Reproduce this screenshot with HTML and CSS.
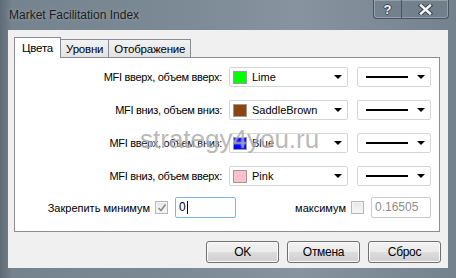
FILE: index.html
```html
<!DOCTYPE html>
<html lang="ru">
<head>
    <meta charset="UTF-8">
    <title>Market Facilitation Index</title>
    <link rel="stylesheet" href="styles.css">
</head>
<body>
    <div class="window">
        <div class="titlebar">
            <span class="title">Market Facilitation Index</span>
            <div class="caption-buttons">
                <span class="cap-btn help">?</span>
                <span class="cap-btn close">
                    <svg width="15" height="11" viewBox="0 0 15 11">
                        <path d="M3 1.5 L12 9.5 M12 1.5 L3 9.5" stroke="#3a444c" stroke-width="4.4" stroke-linecap="square"/>
                        <path d="M3 1.5 L12 9.5 M12 1.5 L3 9.5" stroke="#f4f6f8" stroke-width="2.4" stroke-linecap="square"/>
                    </svg>
                </span>
            </div>
        </div>

        <div class="client">
            <div class="tabs">
                <span class="tab active">Цвета</span>
                <span class="tab">Уровни</span>
                <span class="tab">Отображение</span>
            </div>

            <div class="panel">
                <div class="rows">
                    <label class="row-label">MFI вверх, объем вверх:</label>
                    <div class="combo"><span class="swatch" style="background:#00ff00"></span><span class="combo-text">Lime</span><span class="arrow"></span></div>
                    <div class="combo line-combo"><span class="line"></span><span class="arrow"></span></div>

                    <label class="row-label">MFI вниз, объем вниз:</label>
                    <div class="combo"><span class="swatch" style="background:#8b4513"></span><span class="combo-text">SaddleBrown</span><span class="arrow"></span></div>
                    <div class="combo line-combo"><span class="line"></span><span class="arrow"></span></div>

                    <label class="row-label">MFI вверх, объем вниз:</label>
                    <div class="combo"><span class="swatch" style="background:#0000ff"></span><span class="combo-text">Blue</span><span class="arrow"></span></div>
                    <div class="combo line-combo"><span class="line"></span><span class="arrow"></span></div>

                    <label class="row-label">MFI вниз, объем вверх:</label>
                    <div class="combo"><span class="swatch" style="background:#ffc0cb"></span><span class="combo-text">Pink</span><span class="arrow"></span></div>
                    <div class="combo line-combo"><span class="line"></span><span class="arrow"></span></div>
                </div>

                <div class="limits">
                    <div class="limit limit-min">
                        <span class="limit-label">Закрепить минимум</span>
                        <span class="checkbox checked">
                            <svg width="10" height="10" viewBox="0 0 10 10"><path d="M1.5 5 L4 7.5 L8.5 1.5" fill="none" stroke="#8a8a8a" stroke-width="1.6"/></svg>
                        </span>
                        <span class="field focused">0<span class="caret"></span></span>
                    </div>
                    <div class="limit limit-max">
                        <span class="limit-label">максимум</span>
                        <span class="checkbox"></span>
                        <span class="field disabled">0.16505</span>
                    </div>
                </div>
            </div>

            <div class="buttons">
                <span class="button">OK</span>
                <span class="button">Отмена</span>
                <span class="button">Сброс</span>
            </div>

            <div class="watermark">strategy4you.ru</div>
        </div>
    </div>
</body>
</html>
```

FILE: styles.css
```css
body {
    margin: 0;
    padding: 0;
    font-family: "Liberation Sans", Arial, sans-serif;
    font-size: 11px;
    color: #000;
}
.window {
    width: 456px;
    height: 278px;
    box-sizing: border-box;
    padding: 0 8px 10px 8px;
    background: linear-gradient(90deg, #5f6b75 0, #75838e 12px, #7c8a95 40%, #8794a0 65%, #74828d 100%);
    display: flex;
    flex-direction: column;
    overflow: hidden;
}
.titlebar {
    height: 30px;
    flex: none;
    display: flex;
    align-items: flex-start;
    justify-content: space-between;
}
.title {
    margin-top: 8px;
    margin-left: 1px;
    font-size: 12px;
    color: #1c1c1c;
    text-shadow: 0 0 4px rgba(255, 255, 255, 0.35);
}
.caption-buttons {
    display: flex;
    height: 19px;
    border: 1px solid #48545e;
    border-top: none;
    border-radius: 0 0 4px 4px;
    box-shadow: inset 0 0 0 1px rgba(255, 255, 255, 0.25);
    background: rgba(110, 124, 136, 0.6);
    box-sizing: border-box;
    margin-right: -1px;
}
.cap-btn {
    display: flex;
    align-items: center;
    justify-content: center;
}
.help {
    width: 27px;
    border-right: 1px solid #48545e;
    color: #f4f6f8;
    font-weight: bold;
    font-size: 13px;
    text-shadow: 1px 0 #3a444c, -1px 0 #3a444c, 0 1px #3a444c, 0 -1px #3a444c;
}
.close {
    width: 46px;
}
.client {
    flex: 1;
    background: #f0f0f0;
    position: relative;
    padding: 7px 8px 0 6px;
    box-sizing: border-box;
    display: flex;
    flex-direction: column;
}
.tabs {
    display: flex;
    align-items: flex-end;
    height: 20px;
    position: relative;
    z-index: 1;
}
.tab {
    height: 17px;
    padding: 0 5px;
    border: 1px solid #898c95;
    border-bottom: none;
    background: linear-gradient(#f2f2f2, #e3e3e3);
    margin-left: -1px;
    line-height: 18px;
    font-size: 11.5px;
    letter-spacing: -0.2px;
}
.tab.active {
    height: 20px;
    line-height: 20px;
    background: #fff;
    margin-left: 0;
    margin-bottom: -1px;
    padding: 0 7px 0 7px;
    z-index: 2;
}
.tab.active + .tab {
    margin-left: -1px;
}
.panel {
    height: 175px;
    box-sizing: border-box;
    border: 1px solid #898c95;
    background: #fff;
    padding: 9px 8px 0 0;
}
.rows {
    display: grid;
    grid-template-columns: 1fr 119px 75px;
    grid-auto-rows: 20px;
    column-gap: 8px;
    row-gap: 13px;
    align-items: center;
}
.row-label {
    text-align: right;
    margin-right: -1px;
    letter-spacing: -0.3px;
}
.rows .line-combo {
    margin-left: 1px;
}
.combo {
    height: 20px;
    box-sizing: border-box;
    border: 1px solid #d5d5d5;
    border-radius: 2px;
    background: #fff;
    display: flex;
    align-items: center;
    padding: 0 3px 0 3px;
}
.swatch {
    width: 12px;
    height: 11px;
    border: 1px solid #9a9a9a;
    flex: none;
}
.combo-text {
    margin-left: 5px;
    flex: 1;
}
.arrow {
    width: 0;
    height: 0;
    border-left: 4px solid transparent;
    border-right: 4px solid transparent;
    border-top: 4px solid #000;
    margin-right: 2px;
    margin-left: auto;
}
.line-combo {
    padding-left: 8px;
}
.line {
    width: 42px;
    height: 2px;
    background: #000;
}
.limits {
    display: flex;
    align-items: center;
    margin-top: 11px;
    height: 21px;
}
.limit {
    display: flex;
    align-items: center;
}
.limit-min {
    width: 221px;
    justify-content: flex-end;
}
.limit-max {
    flex: 1;
    justify-content: flex-end;
}
.checkbox {
    width: 13px;
    height: 13px;
    box-sizing: border-box;
    border: 1px solid #b6b6b6;
    background: linear-gradient(#e6e6e6, #f7f7f7);
    box-shadow: inset 0 0 0 1px #f4f4f4;
    margin-left: 5px;
    margin-right: 7px;
    display: flex;
    align-items: center;
    justify-content: center;
}
.field {
    height: 21px;
    box-sizing: border-box;
    border: 1px solid #abadb3;
    border-radius: 2px;
    padding: 0 3px;
    line-height: 19px;
    display: flex;
    align-items: center;
    font-size: 12px;
}
.field.focused {
    width: 61px;
    border-color: #7eb4ea;
    background: #fff;
}
.caret {
    width: 1px;
    height: 13px;
    background: #000;
    margin-left: 1px;
}
.field.disabled {
    width: 60px;
    color: #8d8d8d;
    border-color: #c9c9c9;
    background: #fff;
}
.buttons {
    display: flex;
    justify-content: flex-end;
    gap: 8px;
    margin-top: 9px;
    margin-right: -1px;
}
.button {
    width: 73px;
    height: 22px;
    box-sizing: border-box;
    border: 1px solid #707070;
    border-radius: 3px;
    background: linear-gradient(#f2f2f2 0, #ebebeb 50%, #dddddd 51%, #cfcfcf 100%);
    box-shadow: inset 0 0 0 1px #fbfbfb;
    display: flex;
    align-items: center;
    justify-content: center;
    font-size: 12px;
    letter-spacing: -0.3px;
}
.watermark {
    position: absolute;
    left: 132px;
    top: 94px;
    font-size: 26px;
    color: rgba(140, 140, 140, 0.6);
    text-shadow: 0 0 2px rgba(255, 255, 255, 0.8);
    pointer-events: none;
}
```
